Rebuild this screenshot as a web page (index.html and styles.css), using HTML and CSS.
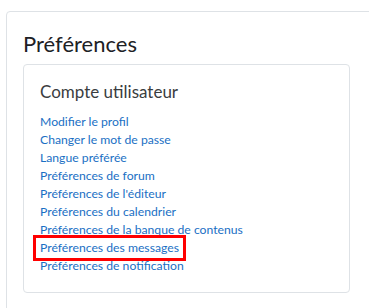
FILE: index.html
```html
<!DOCTYPE html>
<html lang="fr">
<head>
    <meta charset="UTF-8">
    <meta name="viewport" content="width=device-width, initial-scale=1.0">
    <title>Préférences</title>
    <link rel="stylesheet" href="styles.css">
</head>
<body>

<!-- Préférences -->
<div class="page">
    <div class="main-card">
        <h2 class="page-title">Préférences</h2>

        <div class="pref-card">
            <h3 class="pref-title">Compte utilisateur</h3>
            <ul class="pref-links">
                <li><a href="#">Modifier le profil</a></li>
                <li><a href="#">Changer le mot de passe</a></li>
                <li><a href="#">Langue préférée</a></li>
                <li><a href="#">Préférences de forum</a></li>
                <li><a href="#">Préférences de l'éditeur</a></li>
                <li><a href="#">Préférences du calendrier</a></li>
                <li><a href="#">Préférences de la banque de contenus</a></li>
                <li><a href="#" class="highlight">Préférences des messages</a></li>
                <li><a href="#">Préférences de notification</a></li>
            </ul>
        </div>
    </div>
</div>

</body>
</html>
```

FILE: styles.css
```css
body {
    font-family: Lato, "Noto Sans", Arial, sans-serif;
    background-color: #fff;
    margin: 0;
    padding: 0;
    overflow: hidden;
}

.page {
    padding: 11px 0 0 6px;
}

.main-card {
    width: 400px;
    height: 320px;
    border: 1px solid #dee2e6;
    border-radius: 4px;
    padding: 19px 16px 0;
    box-sizing: border-box;
}

.page-title {
    font-size: 22px;
    font-weight: 400;
    color: #1d2125;
    margin: 0 0 7px;
    line-height: 26px;
}

.pref-card {
    width: 327px;
    border: 1px solid #dee2e6;
    border-radius: 4px;
    padding: 15px 16px 17px;
    box-sizing: border-box;
}

.pref-title {
    font-size: 17px;
    font-weight: 400;
    color: #3a3d40;
    margin: 0 0 9px;
    line-height: 24px;
}

.pref-links {
    list-style: none;
    margin: 0;
    padding: 0;
}

.pref-links li {
    font-size: 12.2px;
    line-height: 18px;
}

.pref-links a {
    color: #1a6fc4;
    text-decoration: none;
}

.pref-links a.highlight {
    display: inline-block;
    outline: 3px solid #f00;
    outline-offset: 1px;
    padding: 1px 3px 1px 3px;
    margin: 0 -3px;
    line-height: 16px;
}
```
